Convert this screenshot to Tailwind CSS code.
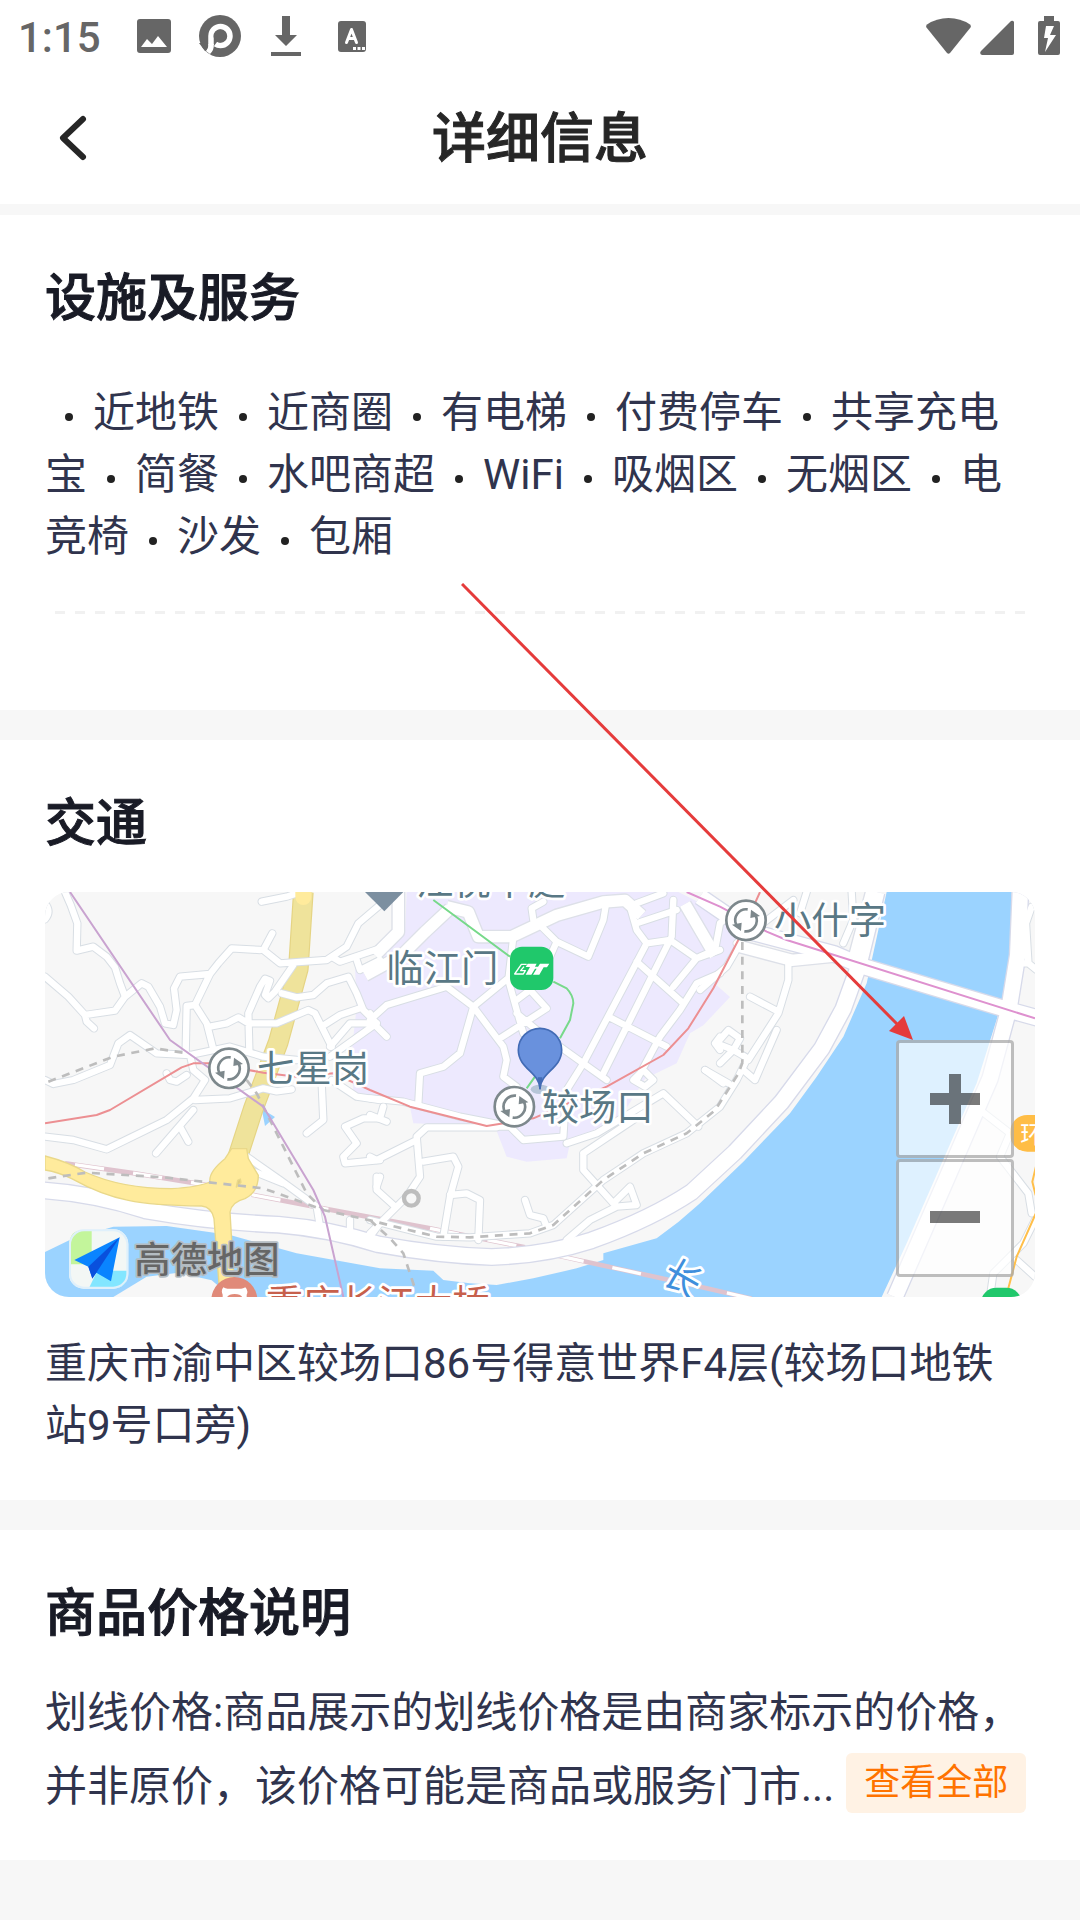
<!DOCTYPE html>
<html lang="zh-CN">

<head>
    <meta charset="UTF-8">
    <meta name="viewport" content="width=device-width, initial-scale=1.0">
    <title>详细信息</title>
    <script src="https://cdn.jsdelivr.net/npm/@tailwindcss/browser@4"></script>
</head>

<body class="relative min-h-screen bg-[#f7f7f7] font-['Roboto','Noto_Sans_CJK_SC',sans-serif] text-[42px] leading-[62px] text-[#30344d]">
    <header class="bg-white">
        <!-- Status bar -->
        <div class="flex h-[72px] items-center justify-between pr-5 pl-[18px] text-[#666]">
            <div class="flex items-center gap-6">
                <span class="mr-2 pt-1 font-medium">1:15</span>
                <svg class="size-[42px]" viewBox="0 0 42 42" fill="currentColor">
                    <path fill-rule="evenodd" d="M7 4h28q3 0 3 3v28q0 3-3 3H7q-3 0-3-3V7q0-3 3-3zM8 32h26l-9-11-6 8-5-5z" />
                </svg>
                <svg class="size-[42px]" viewBox="0 0 42 42">
                    <circle cx="21" cy="21" r="21" fill="currentColor" />
                    <path d="M12 30V21a9.500 9.500 0 1 1 9.500 9.500q-3 0-5-1.500" fill="none" stroke="white" stroke-width="5.500" />
                    <path d="M9 29h5.800q.5 6-3.800 10l-4-3q2-3 2-7z" fill="white" />
                    <path d="M0 28l9 0q1 6-3 8z" fill="currentColor" />
                    <circle cx="21" cy="21" r="6.500" fill="currentColor" />
                </svg>
                <svg class="size-[42px]" viewBox="0 0 42 42" fill="currentColor">
                    <path d="M17 1h8v19h7L21 31 10 20h7zM6 37h30v4H6z" />
                </svg>
                <svg class="size-[42px]" viewBox="0 0 42 42">
                    <rect x="7" y="6" width="28" height="31" rx="3" fill="currentColor" />
                    <path d="M15.500 27.500L20.500 14.500L25.500 27.500M17.500 23.500h6" fill="none" stroke="white" stroke-width="3" stroke-linejoin="round" stroke-linecap="round" />
                    <path d="M22 32h3v3h-3zm4.500 0h3v3h-3zm4.500 0h3v3h-3z" fill="white" />
                </svg>
            </div>
            <div class="flex items-center">
                <svg class="h-[42px] w-[45px]" viewBox="0 0 45 42" fill="currentColor">
                    <path d="M22.500 3q12 0 21.500 6.500 1.500 1.500.5 3L24 38q-1.500 1.500-3 0L.5 12.500q-1-1.500.5-3Q10.500 3 22.500 3z" />
                </svg>
                <svg class="ml-[9px] h-[42px] w-[34px]" viewBox="0 0 34 42" fill="currentColor">
                    <path d="M34 7v31q0 2-2 2H2q-3-1-1-4L31 6q2-1 3 1z" />
                </svg>
                <svg class="ml-6 h-[42px] w-[22px]" viewBox="0 0 22 42" fill="currentColor">
                    <path fill-rule="evenodd" d="M6 1h10v5h4q2 0 2 2v30q0 2-2 2H2q-2 0-2-2V8q0-2 2-2h4zM8 11L6 23h4L7 37 18 20h-6l4-9z" />
                </svg>
            </div>
        </div>
        <div class="flex h-[132px] items-center justify-between px-12">
            <button type="button" aria-label="返回" class="size-[50px]">
                <svg class="size-[50px]" viewBox="0 0 50 50" fill="none" stroke="#262626" stroke-width="6" stroke-linecap="round" stroke-linejoin="round">
                    <path d="M35 6L15 25l20 19" />
                </svg>
            </button>
            <h1 class="pt-1 text-[54px] font-medium text-[#262626] [-webkit-text-stroke:1px]">详细信息</h1>
            <span class="w-[50px]"></span>
        </div>
    </header>

    <main class="mt-[11px] flex flex-col gap-[30px]">
        <section class="bg-white px-[45px] pt-[54px] pb-24">
            <h2 class="text-[51px] leading-[60px] font-medium text-[#191b26] [-webkit-text-stroke:1px]">设施及服务</h2>
            <p class="mt-[53px]"><i class="mx-5 mb-1.5 inline-block size-2 rounded-full bg-[#222]"></i>近地铁<i class="mx-5 mb-1.5 inline-block size-2 rounded-full bg-[#222]"></i>近商圈<i class="mx-5 mb-1.5 inline-block size-2 rounded-full bg-[#222]"></i>有电梯<i class="mx-5 mb-1.5 inline-block size-2 rounded-full bg-[#222]"></i>付费停车<i class="mx-5 mb-1.5 inline-block size-2 rounded-full bg-[#222]"></i>共享充电宝<i class="mx-5 mb-1.5 inline-block size-2 rounded-full bg-[#222]"></i>简餐<i class="mx-5 mb-1.5 inline-block size-2 rounded-full bg-[#222]"></i>水吧商超<i class="mx-5 mb-1.5 inline-block size-2 rounded-full bg-[#222]"></i>WiFi<i class="mx-5 mb-1.5 inline-block size-2 rounded-full bg-[#222]"></i>吸烟区<i class="mx-5 mb-1.5 inline-block size-2 rounded-full bg-[#222]"></i>无烟区<i class="mx-5 mb-1.5 inline-block size-2 rounded-full bg-[#222]"></i>电竞椅<i class="mx-5 mb-1.5 inline-block size-2 rounded-full bg-[#222]"></i>沙发<i class="mx-5 mb-1.5 inline-block size-2 rounded-full bg-[#222]"></i>包厢</p>
            <div class="mx-[10px] mt-[43px] h-[3px] bg-[repeating-linear-gradient(90deg,#f1f1f1_0px_10px,transparent_10px_20px)]"></div>
        </section>

        <section class="bg-white px-[45px] pt-[54px] pb-[43px]">
            <h2 class="text-[51px] leading-[60px] font-medium text-[#191b26] [-webkit-text-stroke:1px]">交通</h2>
            <div class="relative mt-[38px] overflow-hidden rounded-3xl bg-[#f7f7f7]">
                <svg class="block h-auto w-full" viewBox="0 0 2970 1215" fill="none" stroke-linejoin="round">
                    <defs>
                        <g id="streets" stroke-linecap="round">
                            <g transform="translate(-45 -36)">
                                <path d="M105 36L122 75 142 130 140 212 190 200 230 230 255 262 270 310 285 350 255 392 165 405 115 350 45 290M165 405L170 425 192 445M285 350L335 310 355 320 390 380 405 430 430 435 440 390 432 325 450 290 540 282M690 210L605 205 565 250 540 282 495 375 470 378 467 515M495 375L530 430 548 500" />
                                <path d="M540 440L590 430 625 412 655 430 740 430 835 390 855 400 880 450 905 500M658 510L655 400 690 320 705 296 720 302 705 345 715 355 735 335 790 255M727 160L700 210 750 250 890 240 950 200 985 130 1050 75M905 230L930 245 1050 205M755 340L800 352 850 345 890 310 955 290 980 340 1000 390 1040 430M875 440L930 405 990 385M695 65L770 50 830 30" />
                                <path d="M45 600L70 612 130 600 240 555 265 490 300 465 380 520 480 525 600 500 700 530 800 540M480 525L490 570 525 600 490 655 410 720 230 808 130 780 45 770M495 660L600 655 700 625 740 634 785 628M450 740L475 785M490 690L378 820M410 580L420 600 440 605 470 585M875 610L880 720 830 760M900 500L960 430 1040 430 900 530M905 600L980 650 1050 660M1050 715L1000 715 945 740 980 790 940 830 945 850 1050 840M650 830L750 900 860 980 870 1040M660 870L760 910M960 1060V1020M1050 890L1040 920M1020 1070L1050 1030" />
                                <path d="M45 70Q65 95 45 118M980 240L990 270 1050 240" />
                            </g>
                            <g transform="translate(975 -36)">
                                <path d="M520 65L485 85 490 120M515 140L560 185 655 230 700 120 710 60M560 185L540 230M430 170L415 300 440 390 460 460M310 380L420 290M230 320L310 380 400 500 410 540 400 590 440 620M310 380L270 520 220 560 150 580 145 670M0 420L50 375 230 320M0 400L20 440 50 470M440 360L480 330 530 385 390 475M440 400L500 450 640 550 710 600" />
                                <path d="M830 190L640 550 590 630M910 60L905 170 840 300 700 580M715 410L890 500M800 245L940 370M780 80L800 150 830 190 900 180 980 235 1050 210M1050 280L980 310 930 390 870 470 800 600M980 235L910 320M800 130L920 90M800 70L880 40M790 600L820 570 850 600 825 620zM1050 470L1035 490 1050 510M1005 570L1060 610" />
                                <path d="M0 655L100 665 270 710 400 735M40 680L30 715M0 705L50 725M380 740L420 740 460 780 580 770 585 690M590 790L680 760 880 640 985 740M640 820L760 740 820 700M640 820L640 870 730 970 780 920 800 975 740 980 660 1020 590 1080M465 960L480 1005 520 1015 530 1040M380 742H170L140 770 150 890 110 950 0 1060M140 780L20 840 0 830M160 845L250 830 265 860 240 950 220 1070M240 945L290 940 330 960 325 1080M20 890L20 930 70 975" />
                                <path d="M0 1020L100 1045 200 1070 300 1072 480 1060 550 1035 700 900 820 820 950 760 1050 680 1100 600 1130 540" />
                            </g>
                            <g transform="translate(1965 -36)">
                                <path d="M145 540L235 400 265 300 265 240M150 350L235 395M130 570L165 600 230 450M15 570L85 610M60 550L100 510 135 530M100 510L50 490 85 450 120 475zM0 230L45 210 60 130 110 90M0 330L80 260 115 200M320 36L300 100M455 36L460 120 430 190M110 190L280 60M985 245L978 130 995 80M940 250H985L1010 270M840 690L930 760 900 830 985 940 995 1000M870 1250L880 1180 970 1090 1005 1020M950 1140L1005 1190" />
                            </g>
                        </g>
                        <g id="avenues">
                            <path d="M1060 0V120L990 190M1215 50L1140 120 1070 190 960 250M1205 44L1270 60 1300 134 1400 134 1535 70 1675 30 1740 25 1790 70M1920 36L2010 190M2070 160L2240 205 2390 190M2480 0L2430 190" />
                        </g>
                        <g id="highway">
                            <path d="M-10 895Q150 905 300 955 500 990 700 998 850 1010 1000 1057 1180 1090 1340 1095 1500 1090 1640 1045 1820 980 1940 900L2070 780 2210 630 2330 470 2395 350 2440 225 2495 0" />
                            <path d="M1965 14L2120 120 2365 185 2460 225 2895 355 2985 380M2926 0L2918 190 2892 350 2835 560 2705 860 2550 1215" />
                        </g>
                        <g id="loop-line">
                            <circle r="59" fill="white" stroke="#7d888c" stroke-width="8" />
                            <path d="M5-33A33 33 0 0 0-29 14M-5 33A33 33 0 0 0 29-14" stroke="#7d888c" stroke-width="8" />
                            <path d="M-42 13L-13 7-15 32zM42-13L13-7 15-32z" fill="#7d888c" />
                        </g>
                    </defs>

                    <!-- Land, district and river -->
                    <path fill="#ede9fe" d="M1085 0L1080 125 975 215 930 225 935 345 920 480 925 600 1095 645 1105 694 1350 704 1385 794 1445 809 1565 799 1575 754 1735 664 1800 560 1895 514 1935 424 1975 400 2055 315 2015 280 2090 150 2000 50 1900 0z" />
                    <path fill="#9bd3ff" d="M0 1080L85 1039 205 1004 365 1002 555 1029 755 1084 1005 1129 1165 1136 1195 1164 1275 1174 1355 1179 1465 1159 1595 1129 1675 1104V1084L1835 1039 1900 990 1965 934 2095 809 2235 664 2315 554 2395 434 2465 274 2525 0H2900L2895 184 2875 319 2795 574 2585 1054 2510 1215H0zM650 650L690 675 660 702z" />
                    <path fill="#f7f7f7" d="M205 1215L305 1154 400 1142 500 1165 560 1215z" />

                    <!-- Railway -->
                    <g stroke="#dfc3ce" stroke-width="14">
                        <path d="M60 814L270 844 490 880M620 908L850 952 1155 1009 1440 1066M1530 1089L1965 1184 2120 1220" />
                        <path stroke="white" stroke-width="10" stroke-dasharray="88 88" d="M90 818L270 844 490 880M620 908L850 952M1155 1009L1440 1066M1530 1089L1965 1184 2120 1220" />
                    </g>

                    <!-- Trunk road -->
                    <path stroke="#e5d484" stroke-width="62" d="M775 0L760 230 700 450 625 650 570 820" />
                    <path stroke="#efe39b" stroke-width="55" d="M775 0L760 230 700 450 625 650 570 820" />

                    <use href="#avenues" stroke="#dde0e8" stroke-width="42" />
                    <use href="#streets" stroke="#d8dee4" stroke-width="25" />
                    <use href="#highway" stroke="#d7daea" stroke-width="54" />
                    <use href="#avenues" stroke="white" stroke-width="34" />
                    <use href="#streets" stroke="white" stroke-width="19" />
                    <use href="#highway" stroke="white" stroke-width="46" />

                    <g stroke="#e9d88a" fill="#ffeb9c" stroke-width="4">
                        <path d="M0 792Q70 810 120 840 230 890 380 890 460 885 495 870 490 840 540 800L560 770H605L610 800 640 850Q640 900 600 920 560 930 555 960L570 1215H525L507 980Q500 945 470 942 320 940 250 925 170 910 80 860 40 840 0 834z" />
                        <path d="M578 865l8-4 2 10-14 14z" fill="#e0cc80" />
                    </g>
                    <path stroke="#ffeb9c" stroke-width="48" d="M775 -5V15" stroke-linecap="round" />

                    <!-- Metro lines -->
                    <g stroke="#bdbdbd" stroke-width="8" stroke-dasharray="24 20">
                        <path d="M10 569L205 494 330 469 425 484M605 564L635 604 785 904 835 954M10 859L125 842 355 856 655 889 835 954 975 985 1075 1010 1175 1034 1275 1036 1455 1024 1525 999 1675 864 1795 784 1925 724 2010 655 2080 545 2093 510M975 984L1035 1039 1075 1084 1110 1190M2092 150V510" />
                    </g>
                    <g stroke-width="6">
                        <path stroke="#ec8f92" d="M0 694L155 669 195 654 410 526 445 514 495 514 655 542 755 554 865 544 975 594 1095 644 1325 702 1465 679 1685 584 1855 489 1930 409 2005 289 2080 144 2145 0" />
                        <path stroke="#c9a3d0" d="M75 0L375 444 655 644 805 894 840 974 895 1215" />
                        <path stroke="#de91cf" d="M1925 0L2025 44 2165 119 2225 144 2970 379" />
                        <path stroke="#77d98a" d="M1165 24L1395 194M1525 269L1565 289Q1585 310 1585 334L1575 384 1545 439M1470 554L1445 589" />
                        <path stroke="#ffbf4a" d="M2975 815L2962 869 2972 910M2972 965L2915 1094 2890 1189" />
                    </g>

                    <!-- Places -->
                    <path fill="#7c8fa0" d="M960 0H1075L1018 58z" />
                    <circle cx="1099" cy="919" r="22" fill="#f7f7f7" stroke="#bdbdbd" stroke-width="13" />
                    <use href="#loop-line" x="552" y="529" />
                    <use href="#loop-line" x="1408" y="644" />
                    <use href="#loop-line" x="2103" y="85" />
                    <g transform="translate(1395 164)">
                        <rect width="130" height="130" rx="36" fill="#20c86b" />
                        <path stroke="white" stroke-width="4" d="M50 53H34L14 82H40L46 72H32L42 60" />
                        <path fill="white" d="M53 51H80L75 60H84L90 51H118L111 62H101L88 84H69L80 66H75L64 84H47L60 61H47z" />
                    </g>
                    <ellipse cx="1485" cy="592" rx="28" ry="14" fill="#b7c5d8" />
                    <path fill="#6991dd" stroke="#426bb5" stroke-width="5" d="M1485 590C1483 540 1420 530 1420 474A65 65 0 0 1 1550 474C1550 530 1487 540 1485 590z" />
                    <path fill="#426bb5" d="M1478 556h14l-5 36h-4z" />
                    <circle cx="568" cy="1224" r="69" fill="#e08a79" />
                    <path fill="white" d="M535 1186q8 5 15 4h36q7 1 15-4 10 10 4 22v10h-12q-4-12-24-12t-24 12h-12v-10q-6-12 2-22z" />
                    <rect x="2895" y="669" width="160" height="110" rx="52" fill="#ffbd46" />
                    <rect x="2808" y="1187" width="122" height="120" rx="46" fill="#20c86b" />

                    <g font-size="112" fill="#597885" stroke="white" stroke-width="16" paint-order="stroke">
                        <text x="636" y="569">七星岗</text>
                        <text x="1024" y="271">临江门</text>
                        <text x="1490" y="686">较场口</text>
                        <text x="2187" y="126">小什字</text>
                        <text x="1113" y="10">江悦华庭</text>
                        <text x="662" y="1276" fill="#c7604c">重庆长江大桥</text>
                        <text transform="translate(1844 1166) rotate(30)" x="0" y="0" fill="#3f8fdc">长</text>
                    </g>
                    <text x="2926" y="752" font-size="72" fill="white">环</text>

                    <!-- Map provider -->
                    <g transform="translate(72 1012)">
                        <rect width="178" height="178" rx="44" fill="#f3f7f5" />
                        <path fill="#c3f59b" d="M44 2H68V105H2V44Q2 2 44 2z" />
                        <path fill="#83e6ff" d="M85 124H176V134Q176 176 134 176H60z" />
                        <path fill="#0a84ff" d="M152 24L16 92 58 112 70 146 82 130 126 156z" />
                        <path fill="#0950dd" d="M152 24L58 112 70 148 82 130z" />
                        <rect x="3" y="3" width="172" height="172" rx="42" stroke="#dff0fb" stroke-width="6" />
                    </g>
                    <text x="268" y="1144" font-size="109" font-weight="500" fill="#666" stroke="#b4bcc2" stroke-width="10" paint-order="stroke">高德地图</text>
                </svg>
                <div class="absolute right-[21px] bottom-5 flex flex-col gap-px">
                    <button type="button" aria-label="放大" class="flex size-[118px] items-center justify-center rounded border-3 border-black/25 bg-white/67">
                        <svg class="size-[50px]" viewBox="0 0 50 50" fill="#000" fill-opacity=".52">
                            <path d="M19 0h12v19h19v12H31v19H19V31H0V19h19z" />
                        </svg>
                    </button>
                    <button type="button" aria-label="缩小" class="flex size-[118px] items-center justify-center rounded border-3 border-black/25 bg-white/67">
                        <svg class="size-[50px]" viewBox="0 0 50 50" fill="#000" fill-opacity=".52">
                            <path d="M0 18h50v12H0z" />
                        </svg>
                    </button>
                </div>
            </div>
            <p class="mt-9">重庆市渝中区较场口86号得意世界F4层(较场口地铁站9号口旁)</p>
        </section>

        <section class="bg-white px-[45px] pt-[54px] pb-9">
            <h2 class="text-[51px] leading-[60px] font-medium text-[#191b26] [-webkit-text-stroke:1px]">商品价格说明</h2>
            <p class="mt-8 leading-[74px]">划线价格:商品展示的划线价格是由商家标示的价格，并非原价，该价格可能是商品或服务门市...<button type="button" class="ml-3 h-[60px] rounded-md bg-[#fff2e4] px-[18px] align-[6px] text-4xl leading-[60px] text-[#ff7300]">查看全部</button></p>
        </section>
    </main>

    <!-- Pointer to the zoom buttons -->
    <svg class="pointer-events-none absolute top-[583px] left-[461px] h-[457px] w-[452px]" viewBox="0 0 452 457">
        <path d="M1 1L436 441" stroke="#e53b3b" stroke-width="3" />
        <path d="M452 457L443 433L428 448z" fill="#e53b3b" />
    </svg>
</body>

</html>
